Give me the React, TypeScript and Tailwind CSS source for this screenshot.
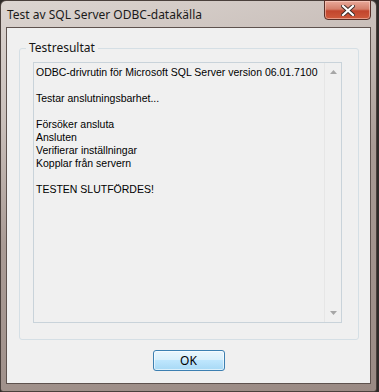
import React from 'react';

const lines: (string | null)[] = [
  'ODBC-drivrutin för Microsoft SQL Server version 06.01.7100',
  null,
  'Testar anslutningsbarhet...',
  null,
  'Försöker ansluta',
  'Ansluten',
  'Verifierar inställningar',
  'Kopplar från servern',
  null,
  'TESTEN SLUTFÖRDES!',
];

const CloseGlyph = () => (
  <svg width="14" height="11" viewBox="0 0 14 11">
    <path
      d="M2 1 L12 10 M12 1 L2 10"
      stroke="#3b2a26"
      strokeWidth="4"
      strokeLinecap="square"
      fill="none"
    />
    <path
      d="M2 1 L12 10 M12 1 L2 10"
      stroke="#ffffff"
      strokeWidth="2.2"
      strokeLinecap="square"
      fill="none"
    />
  </svg>
);

export default function App() {
  return (
    <div className="w-[379px] h-[392px] bg-[#2e2a28] overflow-hidden">
      {/* Window frame */}
      <div className="w-[377px] h-[392px] flex flex-col border border-[#4a403c] rounded-t-[6px] rounded-b-[3px] bg-[linear-gradient(165deg,#dcd5d1_0%,#c9bfba_25%,#a99b95_50%,#9a8a84_100%)]">
        {/* Title bar */}
        <div className="h-[26px] flex items-start shrink-0">
          <div className="pl-[6px] pt-[7px] text-[12px] leading-[14px] text-[#1a1a1a] [font-family:'Noto_Sans','Liberation_Sans',sans-serif]">
            Test av SQL Server ODBC-datakälla
          </div>
          <div className="ml-auto mr-[5px] -mt-px w-[47px] h-[20px] rounded-b-[4px] border border-[#5a3028] bg-[linear-gradient(to_bottom,#e9a99a_0%,#d47f6b_45%,#c2452d_55%,#cf5a3c_100%)] flex items-center justify-center shadow-[inset_0_0_0_1px_rgba(255,220,210,0.5)]">
            <CloseGlyph />
          </div>
        </div>

        {/* Client area */}
        <div className="flex-1 mx-[5px] mb-[7px] border border-[#5e524e] bg-[#f0f0f0] flex flex-col">
          {/* Group box */}
          <div className="relative mt-[20px] ml-[12px] mr-[11px] h-[292px] border border-[#d5dfe5] rounded-[3px] pl-[13px] pr-[16px] pt-[13px] pb-[16px]">
            <div className="absolute -top-[8px] left-[6px] px-[3px] bg-[#f0f0f0] text-[12px] leading-[14px] text-[#151515] [font-family:'Noto_Sans','Liberation_Sans',sans-serif]">
              Testresultat
            </div>
            {/* Text box */}
            <div className="h-full flex border border-[#c9d3da] bg-[#f0f0f0]">
              <div className="flex-1 pl-[2px] pt-[3px] text-[10.5px] leading-[13px] text-[#000] [font-family:'Liberation_Sans',Arial,sans-serif]">
                {lines.map((l, i) =>
                  l === null ? (
                    <div key={i} className="h-[13px]" />
                  ) : (
                    <div key={i} className="whitespace-nowrap">
                      {l}
                    </div>
                  )
                )}
              </div>
              {/* Disabled scrollbar */}
              <div className="w-[17px] flex flex-col justify-between items-center py-[7px] bg-[#f0f0f0] border-l border-[#e6e6e6]">
                <svg width="7" height="4" viewBox="0 0 7 4">
                  <path d="M0 4 L3.5 0 L7 4 Z" fill="#a6a6a6" />
                </svg>
                <svg width="7" height="4" viewBox="0 0 7 4">
                  <path d="M0 0 L3.5 4 L7 0 Z" fill="#a6a6a6" />
                </svg>
              </div>
            </div>
          </div>

          {/* Button row */}
          <div className="flex justify-center mt-[10px]">
            <button className="w-[72px] h-[21px] rounded-[3px] border border-[#3c7fb1] bg-[linear-gradient(to_bottom,#eaf6fd_0%,#d9f0fc_45%,#bee6fd_50%,#a7d9f5_100%)] shadow-[inset_0_0_0_1px_rgba(255,255,255,0.6)] text-[12px] leading-[14px] text-[#000] [font-family:'Noto_Sans','Liberation_Sans',sans-serif]">
              OK
            </button>
          </div>
        </div>
      </div>
    </div>
  );
}
